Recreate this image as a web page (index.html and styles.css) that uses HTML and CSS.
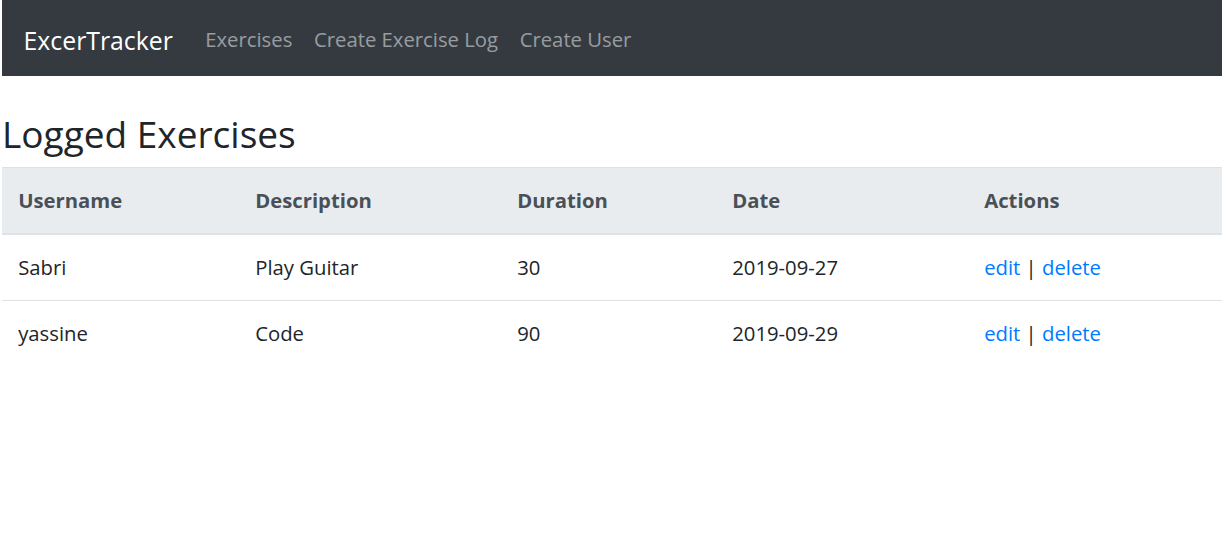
FILE: index.html
```html
<!DOCTYPE html>
<html lang="en">
<head>
<meta charset="utf-8">
<title>ExcerTracker</title>
<link rel="stylesheet" href="styles.css">
</head>
<body>
<div class="page">
  <nav class="navbar">
    <a class="brand" href="#">ExcerTracker</a>
    <ul class="nav">
      <li><a class="nav-link" href="#">Exercises</a></li>
      <li><a class="nav-link" href="#">Create Exercise Log</a></li>
      <li><a class="nav-link" href="#">Create User</a></li>
    </ul>
  </nav>
  <h3 class="title">Logged Exercises</h3>
  <table class="table">
    <colgroup>
      <col class="c1"><col class="c2"><col class="c3"><col class="c4"><col class="c5">
    </colgroup>
    <thead>
      <tr><th>Username</th><th>Description</th><th>Duration</th><th>Date</th><th>Actions</th></tr>
    </thead>
    <tbody>
      <tr><td>Sabri</td><td>Play Guitar</td><td>30</td><td>2019-09-27</td><td><a href="#">edit</a> | <a href="#">delete</a></td></tr>
      <tr><td>yassine</td><td>Code</td><td>90</td><td>2019-09-29</td><td><a href="#">edit</a> | <a href="#">delete</a></td></tr>
    </tbody>
  </table>
</div>
</body>
</html>
```
FILE: styles.css
```css
html, body { margin: 0; padding: 0; background: #fff; }
body {
  font-family: "Segoe UI", "Open Sans", "Noto Sans", sans-serif;
  font-size: 20.3px;
  line-height: 32.4px;
  color: #212529;
}
.page { padding: 0 4px 0 2px; }
.navbar {
  display: flex;
  align-items: center;
  height: 76px;
  padding: 3px 21.6px 0;
  background: #343a40;
  box-sizing: border-box;
}
.brand {
  color: #fff;
  font-size: 24.8px;
  text-decoration: none;
  margin-right: 21.6px;
  line-height: 40px;
}
.nav { display: flex; list-style: none; margin: 0; padding: 0; }
.nav-link {
  display: block;
  padding: 0 10.8px;
  color: rgba(255,255,255,.5);
  text-decoration: none;
}
.title {
  font-size: 37px;
  font-weight: 500;
  line-height: 45px;
  margin: 35px 0 11px;
}
.table {
  width: 100%;
  border-collapse: collapse;
  table-layout: fixed;
}
.c1 { width: 237px; }
.c2 { width: 262px; }
.c3 { width: 215px; }
.c4 { width: 252px; }
.c5 { width: auto; }
.table th, .table td {
  padding: 16.2px;
  text-align: left;
  vertical-align: top;
  border-top: 1px solid #dee2e6;
}
.table thead th {
  background: #e9ecef;
  color: #495057;
  font-weight: 700;
  border-bottom: 2px solid #dee2e6;
}
.table a { color: #007bff; text-decoration: none; }
```
